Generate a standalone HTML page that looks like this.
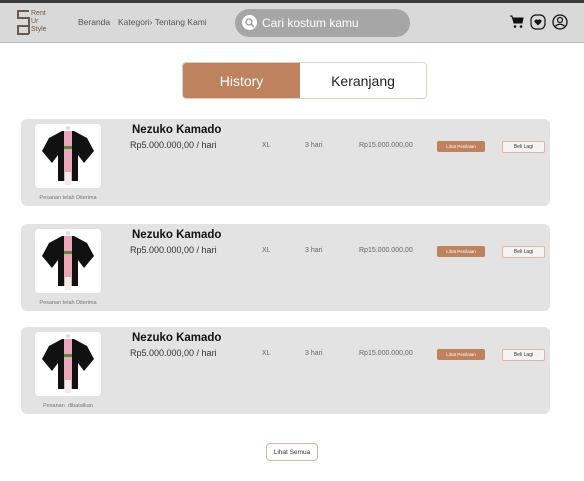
<!DOCTYPE html>
<html><head><meta charset="utf-8"><style>
*{margin:0;padding:0;box-sizing:border-box}
body{width:584px;height:481px;background:#fff;font-family:"Liberation Sans",sans-serif;position:relative;overflow:hidden}
.top{position:absolute;left:0;top:0;width:584px;height:3px;background:#3a3a3a}
.hdr{position:absolute;left:0;top:3px;width:584px;height:40px;background:#d9d9d9;border-bottom:1px solid #bdbdbd}
.abs{position:absolute}
.nav{font-size:8.5px;color:#555;top:17px}
.search{left:235px;top:9px;width:175px;height:28px;border-radius:14px;background:#a6a6a6}
.search .c{position:absolute;left:7px;top:6px;width:15px;height:15px;border-radius:50%;background:#fff}
.search span{position:absolute;left:27px;top:7px;color:#fff;font-size:12px}
.tabs{left:182px;top:62px;width:245px;height:37px;border:1px solid #e6cfc2;border-radius:4px;overflow:hidden}
.tabs .h{position:absolute;left:0;top:0;width:117px;height:100%;background:#be825e;color:#fff;font-size:14px;text-align:center;line-height:36px}
.tabs .k{position:absolute;left:117px;top:0;right:0;height:100%;background:#fff;color:#222;font-size:14px;text-align:center;line-height:36px}
.card{position:absolute;left:21px;width:529px;height:87px;background:#e3e3e3;border-radius:6px}
.img{position:absolute;left:14px;top:5px;width:66px;height:64px;background:#fff;border-radius:4px}
.st{position:absolute;left:0;width:94px;text-align:center;font-size:5.5px;color:#777;top:76px}
.nm{position:absolute;left:111px;top:5px;font-size:11.5px;font-weight:bold;color:#111}
.pr{position:absolute;left:109px;top:21px;font-size:9px;color:#333}
.sm{position:absolute;top:23px;font-size:7px;color:#666}
.b1{position:absolute;left:416px;top:22px;width:48px;height:11px;background:#be825e;border-radius:2px;color:#fff;font-size:4.5px;text-align:center;line-height:11px}
.b2{position:absolute;left:481px;top:22px;width:43px;height:12px;background:#f3f3f3;border:1px solid #d8b8a6;border-radius:2px;color:#333;font-size:5px;text-align:center;line-height:10px}
.more{left:266px;top:443px;width:52px;height:18px;border:1px solid #d8b8a6;border-radius:4px;font-size:6.5px;color:#333;text-align:center;line-height:17px}
</style></head><body>
<div class="top"></div>
<div class="hdr"></div>
<svg class="abs" style="left:16px;top:10px" width="14" height="26" viewBox="0 0 14 26"><path d="M13 1H2v7h11v8H2v8h11" fill="none" stroke="#6b5a4c" stroke-width="2"/><path d="M13 8v16" stroke="#6b5a4c" stroke-width="2"/></svg>
<div class="abs" style="left:31px;top:10px;font-size:7px;line-height:8px;color:#6b5a4c">Rent<br>Ur<br>Style</div>
<div class="abs nav" style="left:78px">Beranda</div>
<div class="abs nav" style="left:118px">Kategori› Tentang Kami</div>
<div class="abs search"><div class="c"></div><svg class="abs" style="left:10px;top:9px" width="10" height="10"><circle cx="4" cy="4" r="3" fill="none" stroke="#999" stroke-width="1.3"/><path d="M6 6l3 3" stroke="#999" stroke-width="1.3"/></svg><span>Cari kostum kamu</span></div>
<svg class="abs" style="left:510px;top:15px" width="14" height="14" viewBox="0 0 14 14"><path d="M0 1h2l2 7h8l1-5H3" fill="#111" stroke="#111"/><circle cx="5" cy="11.5" r="1.3" fill="#111"/><circle cx="11" cy="11.5" r="1.3" fill="#111"/></svg>
<svg class="abs" style="left:530px;top:14px" width="16" height="16"><rect x="1" y="1" width="14" height="14" rx="5" fill="none" stroke="#111" stroke-width="1.2"/><path d="M8 11.5L4.8 8.3a1.8 1.8 0 0 1 3.2-2 1.8 1.8 0 0 1 3.2 2z" fill="#111"/></svg>
<svg class="abs" style="left:552px;top:14px" width="16" height="16"><circle cx="8" cy="8" r="7" fill="none" stroke="#111" stroke-width="1.3"/><circle cx="8" cy="6" r="2.5" fill="none" stroke="#111" stroke-width="1.2"/><path d="M3.5 12.5c2-3 7-3 9 0" fill="none" stroke="#111" stroke-width="1.2"/></svg>
<div class="abs tabs"><div class="h">History</div><div class="k">Keranjang</div></div>

<div class="card" style="top:119px">
<div class="img"><svg width="66" height="64" viewBox="0 0 66 64"><path d="M27 7L14 14L7 27l10 12 6-8v26h20V31l6 8 10-12-7-13L39 7z" fill="#111"/><rect x="29" y="7" width="8" height="50" fill="#e9a7b8"/><rect x="29" y="22" width="8" height="3" fill="#5a8a3a"/><rect x="30" y="48" width="6" height="13" fill="#eee"/><circle cx="33" cy="4" r="2" fill="#ddd"/></svg></div>
<div class="st">Pesanan telah Diterima</div>
<div class="nm">Nezuko Kamado</div><div class="pr">Rp5.000.000,00 / hari</div>
<div class="sm" style="left:241px">XL</div><div class="sm" style="left:284px">3 hari</div><div class="sm" style="left:338px">Rp15.000.000,00</div>
<div class="b1">Lihat Penilaian</div><div class="b2">Beli Lagi</div>
</div>
<div class="card" style="top:224px">
<div class="img"><svg width="66" height="64" viewBox="0 0 66 64"><path d="M27 7L14 14L7 27l10 12 6-8v26h20V31l6 8 10-12-7-13L39 7z" fill="#111"/><rect x="29" y="7" width="8" height="50" fill="#e9a7b8"/><rect x="29" y="22" width="8" height="3" fill="#5a8a3a"/><rect x="30" y="48" width="6" height="13" fill="#eee"/><circle cx="33" cy="4" r="2" fill="#ddd"/></svg></div>
<div class="st">Pesanan telah Diterima</div>
<div class="nm">Nezuko Kamado</div><div class="pr">Rp5.000.000,00 / hari</div>
<div class="sm" style="left:241px">XL</div><div class="sm" style="left:284px">3 hari</div><div class="sm" style="left:338px">Rp15.000.000,00</div>
<div class="b1">Lihat Penilaian</div><div class="b2">Beli Lagi</div>
</div>
<div class="card" style="top:327px">
<div class="img"><svg width="66" height="64" viewBox="0 0 66 64"><path d="M27 7L14 14L7 27l10 12 6-8v26h20V31l6 8 10-12-7-13L39 7z" fill="#111"/><rect x="29" y="7" width="8" height="50" fill="#e9a7b8"/><rect x="29" y="22" width="8" height="3" fill="#5a8a3a"/><rect x="30" y="48" width="6" height="13" fill="#eee"/><circle cx="33" cy="4" r="2" fill="#ddd"/></svg></div>
<div class="st">Pesanan &nbsp;dibatalkan</div>
<div class="nm">Nezuko Kamado</div><div class="pr">Rp5.000.000,00 / hari</div>
<div class="sm" style="left:241px">XL</div><div class="sm" style="left:284px">3 hari</div><div class="sm" style="left:338px">Rp15.000.000,00</div>
<div class="b1">Lihat Penilaian</div><div class="b2">Beli Lagi</div>
</div>
<div class="abs more">Lihat Semua</div>
</body></html>
